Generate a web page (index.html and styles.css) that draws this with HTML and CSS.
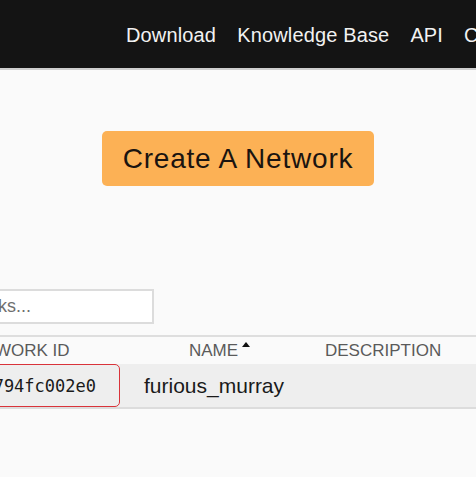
FILE: index.html
```html
<!DOCTYPE html>
<html>
<head>
<meta charset="utf-8">
<link rel="stylesheet" href="styles.css">
</head>
<body>
<header class="topbar">
  <nav class="nav">
    <a class="nav-link">Download</a>
    <a class="nav-link">Knowledge Base</a>
    <a class="nav-link">API</a>
    <a class="nav-link">Community</a>
  </nav>
</header>
<main class="main">
  <div class="create-wrap">
    <button class="create-btn">Create A Network</button>
  </div>
  <div class="search-wrap">
    <input class="search" type="text" placeholder="Search networks...">
  </div>
  <div class="table">
    <div class="thead">
      <div class="th th-id">NETWORK ID</div>
      <div class="th th-name">NAME<span class="sort-arrow"></span></div>
      <div class="th th-desc">DESCRIPTION</div>
    </div>
    <div class="trow">
      <div class="td td-id"><span class="id-box">8056c2e21c794fc002e0</span></div>
      <div class="td td-name">furious_murray</div>
      <div class="td td-desc"></div>
    </div>
  </div>
</main>
</body>
</html>
```
FILE: styles.css
```css
html, body {
  margin: 0;
  padding: 0;
}
body {
  background: #fafafa;
  font-family: "Liberation Sans", Arial, sans-serif;
  overflow: hidden;
  width: 476px;
  height: 477px;
}
.topbar {
  height: 68px;
  background: #141414;
  border-bottom: 2px solid #cfcfcf;
  display: flex;
  align-items: center;
  overflow: hidden;
}
.nav {
  display: flex;
  gap: 21px;
  padding-left: 126px;
  padding-top: 3px;
  white-space: nowrap;
}
.nav-link {
  color: #f2f2f2;
  font-size: 20px;
  letter-spacing: 0.15px;
  text-decoration: none;
}
.main {
  overflow: hidden;
}
.create-wrap {
  display: flex;
  justify-content: center;
  margin-top: 61px;
}
.create-btn {
  background: #fcb155;
  border: none;
  border-radius: 5px;
  font-family: "Liberation Sans", Arial, sans-serif;
  font-size: 28px;
  letter-spacing: 0.8px;
  color: #1a1410;
  height: 55px;
  width: 272px;
  padding: 0;
  line-height: 56px;
}
.search-wrap {
  margin-top: 103px;
  margin-left: -130px;
}
.search {
  box-sizing: border-box;
  width: 284px;
  height: 35px;
  border: 2px solid #dcdcdc;
  background: #fff;
  padding: 0 0 0 10px;
  font-family: "Liberation Sans", Arial, sans-serif;
  font-size: 18px;
  color: #333;
  outline: none;
  display: block;
}
.search::placeholder {
  color: #6f6f6f;
}
.table {
  margin-top: 11px;
  margin-left: -100px;
  width: 576px;
  border-top: 2px solid #dedede;
}
.thead, .trow {
  display: grid;
  grid-template-columns: 224px 181px 1fr;
}
.thead {
  height: 27px;
  align-items: center;
}
.th {
  font-size: 17px;
  color: #5a5a5a;
  white-space: nowrap;
}
.th-id { padding-left: 61px; }
.th-name {
  padding-left: 65px;
  display: flex;
  align-items: flex-start;
}
.th-desc { padding-left: 20px; }
.sort-arrow {
  display: inline-block;
  width: 0;
  height: 0;
  border-left: 4px solid transparent;
  border-right: 4px solid transparent;
  border-bottom: 5px solid #111;
  margin-left: 4px;
  margin-top: 1px;
}
.trow {
  height: 45px;
  background: #eeeeee;
  border-bottom: 2px solid #dcdcdc;
  align-items: center;
  box-sizing: border-box;
}
.td-id {
  display: flex;
  justify-content: flex-end;
  padding-right: 4px;
  height: 43px;
}
.id-box {
  box-sizing: border-box;
  height: 43px;
  border: 1.5px solid #d9333a;
  border-radius: 5px;
  font-family: "DejaVu Sans Mono", "Liberation Mono", monospace;
  font-size: 17px;
  color: #1a1a1a;
  display: flex;
  align-items: center;
  padding-right: 23px;
  padding-left: 10px;
  white-space: nowrap;
  overflow: hidden;
  direction: rtl;
}
.td-name {
  padding-left: 20px;
  font-size: 21px;
  color: #1a1a1a;
}
```
